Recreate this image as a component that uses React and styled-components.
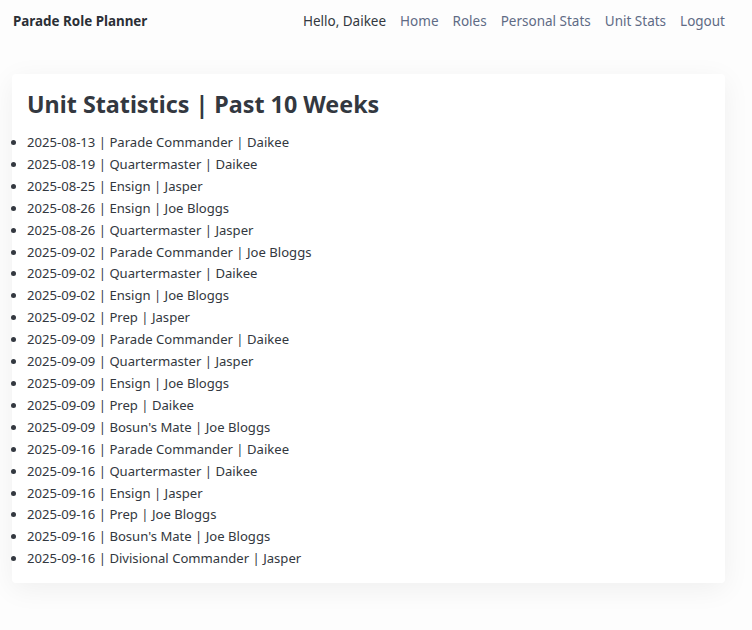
import React from 'react';
import styled, { createGlobalStyle } from 'styled-components';

const GlobalStyle = createGlobalStyle`
	body {
		margin: 0;
		background: #ffffff;
		font-family: 'Noto Sans', 'Open Sans', sans-serif;
		color: #333840;
	}
`;

const Page = styled.div`
	width: 752px;
	min-height: 630px;
	background: #fdfdfd;
`;

const Nav = styled.nav`
	display: flex;
	align-items: center;
	justify-content: space-between;
	height: 42px;
	padding: 0 27px 0 13px;
`;

const Brand = styled.a`
	font-weight: 700;
	font-size: 13.4px;
	color: #2b2f36;
	text-decoration: none;
`;

const Links = styled.div`
	display: flex;
	gap: 14px;
	font-size: 13.5px;
`;

const NavLink = styled.a`
	color: ${(p) => (p.$plain ? '#333840' : '#5f6b85')};
	text-decoration: none;
`;

const Card = styled.section`
	margin: 32px 27px 0 12px;
	padding: 15px 15px 13px;
	background: #fff;
	border-radius: 4px;
	box-shadow: 0 6px 28px rgba(0, 0, 0, 0.06);
`;

const Title = styled.h1`
	margin: 0 0 12px;
	font-size: 23.3px;
	font-weight: 700;
	line-height: 31px;
	color: #333840;
`;

const List = styled.ul`
	margin: 0;
	padding: 0;
	font-size: 13.1px;
	line-height: 21.9px;
`;

const rows = [
	['2025-08-13', 'Parade Commander', 'Daikee'],
	['2025-08-19', 'Quartermaster', 'Daikee'],
	['2025-08-25', 'Ensign', 'Jasper'],
	['2025-08-26', 'Ensign', 'Joe Bloggs'],
	['2025-08-26', 'Quartermaster', 'Jasper'],
	['2025-09-02', 'Parade Commander', 'Joe Bloggs'],
	['2025-09-02', 'Quartermaster', 'Daikee'],
	['2025-09-02', 'Ensign', 'Joe Bloggs'],
	['2025-09-02', 'Prep', 'Jasper'],
	['2025-09-09', 'Parade Commander', 'Daikee'],
	['2025-09-09', 'Quartermaster', 'Jasper'],
	['2025-09-09', 'Ensign', 'Joe Bloggs'],
	['2025-09-09', 'Prep', 'Daikee'],
	['2025-09-09', "Bosun's Mate", 'Joe Bloggs'],
	['2025-09-16', 'Parade Commander', 'Daikee'],
	['2025-09-16', 'Quartermaster', 'Daikee'],
	['2025-09-16', 'Ensign', 'Jasper'],
	['2025-09-16', 'Prep', 'Joe Bloggs'],
	['2025-09-16', "Bosun's Mate", 'Joe Bloggs'],
	['2025-09-16', 'Divisional Commander', 'Jasper'],
];

const App = () => {
	return (
		<Page>
			<GlobalStyle />
			<Nav>
				<Brand href="#">Parade Role Planner</Brand>
				<Links>
					<NavLink $plain>Hello, Daikee</NavLink>
					<NavLink href="#">Home</NavLink>
					<NavLink href="#">Roles</NavLink>
					<NavLink href="#">Personal Stats</NavLink>
					<NavLink href="#">Unit Stats</NavLink>
					<NavLink href="#">Logout</NavLink>
				</Links>
			</Nav>
			<Card>
				<Title>Unit Statistics | Past 10 Weeks</Title>
				<List>
					{rows.map(([date, role, name], i) => (
						<li key={i}>
							{date} | {role} | {name}
						</li>
					))}
				</List>
			</Card>
		</Page>
	);
};

export default App;
